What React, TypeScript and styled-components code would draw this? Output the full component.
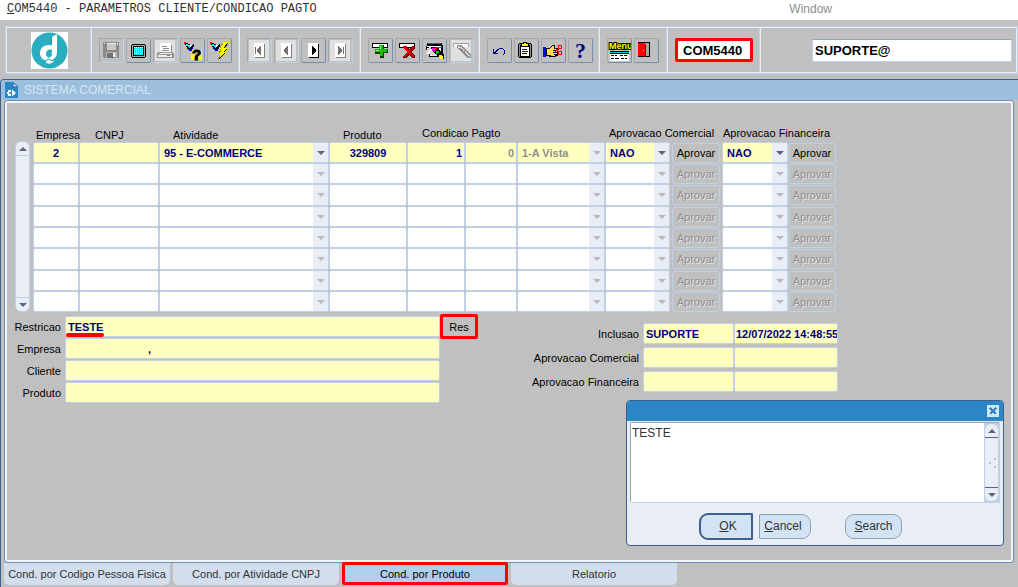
import React from "react";
import styled, { createGlobalStyle, css } from "styled-components";

const colors = {
  face: "#c0c0c0",
  line: "#c0d0e6",
  light: "#e9eef6",
  field: "#ffffc0",
  navy: "#000080",
  steel: "#6f8fb5",
  deep: "#3f5f8f",
  mark: "#ff0000",
};

const GlobalStyle = createGlobalStyle`
  * { box-sizing: border-box; }
  body {
    margin: 0;
    background: ${colors.face};
    font-family: "Liberation Sans", Arial, sans-serif;
    font-size: 11px;
    color: #000;
  }
  button, input, select, textarea {
    font: inherit;
    margin: 0;
    border-radius: 0;
  }
`;

const Page = styled.div`
  min-height: 100vh;
  display: flex;
  flex-direction: column;
`;

/* ---------- menu bar ---------- */

const MenuBar = styled.nav`
  display: flex;
  justify-content: space-between;
  height: 20px;
  padding: 0 186px 0 7px;
  background: #fff;
  flex: none;
`;

const MenuItem = styled.button<{ $mono?: boolean }>`
  padding: 0;
  height: 18px;
  border: 0;
  background: none;
  line-height: 18px;
  font-size: 12px;
  font-family: ${(p) => (p.$mono ? '"Liberation Mono", monospace' : "inherit")};
  color: ${(p) => (p.$mono ? "#303030" : "#8c8c8c")};
  white-space: nowrap;
`;

/* ---------- toolbar ---------- */

const Toolbar = styled.header`
  display: flex;
  height: 48px;
  margin: 6px 0 5px 5px;
  border: 2px solid ${colors.line};
  border-right-width: 1px;
  outline: 1px solid ${colors.light};
  outline-offset: -2px;
  flex: none;
`;

const Group = styled.div<{ $width?: number; $center?: boolean }>`
  display: flex;
  align-items: center;
  gap: 2px;
  flex: ${(p) => (p.$width ? "none" : "1")};
  width: ${(p) => (p.$width ? `${p.$width}px` : "auto")};
  padding-left: ${(p) => (p.$center ? 0 : 7)}px;
  justify-content: ${(p) => (p.$center ? "center" : "flex-start")};
  border-right: 1px solid ${colors.light};
  box-shadow: inset -1px 0 ${colors.line};
  &:last-child {
    border-right: 0;
    box-shadow: none;
    padding: 0 5px 0 51px;
  }
`;

const ToolButton = styled.button`
  width: 25px;
  height: 25px;
  padding: 0;
  background: none;
  border: 1px solid #a6a6a6;
  border-right-color: ${colors.steel};
  border-bottom-color: ${colors.steel};
  border-radius: 2px;
  svg { display: block; }
  &:disabled {
    border-right-color: ${colors.line};
    border-bottom-color: ${colors.line};
  }
`;

const CodeField = styled.input`
  width: 78px;
  height: 24px;
  padding: 0 5px;
  border: 3px solid ${colors.mark};
  border-radius: 2px;
  background: #fff;
  font-size: 13px;
  font-weight: bold;
`;

const UserField = styled.input`
  flex: 1;
  min-width: 0;
  height: 23px;
  padding: 0 2px;
  border: 1px solid ${colors.line};
  border-top-color: #94a3b8;
  border-radius: 2px;
  background: #fff;
  font-size: 13px;
  font-weight: bold;
`;

/* ---------- window ---------- */

const Window = styled.main`
  flex: 1;
  display: flex;
  flex-direction: column;
  border-top: 1px solid ${colors.deep};
  border-left: 1px solid ${colors.deep};
  border-top-left-radius: 4px;
`;

const TitleBar = styled.h1`
  display: flex;
  align-items: center;
  gap: 5px;
  height: 20px;
  margin: 0;
  padding-left: 4px;
  background: #9cbfde;
  color: #d9e6f4;
  font-size: 12px;
  font-weight: normal;
  border-top-left-radius: 3px;
`;

const Panel = styled.section`
  position: relative;
  flex: 1;
  margin: 0 4px 0 3px;
  padding: 22px 0 20px;
  border: 1px solid ${colors.steel};
  border-radius: 3px;
  box-shadow: inset 0 0 0 2px #f1f5fa;
`;

const Records = styled.div`
  display: flex;
  align-items: flex-end;
  gap: 3px;
  padding-left: 10px;
`;

const ScrollTrack = styled.div`
  display: flex;
  flex-direction: column;
  justify-content: space-between;
  align-items: center;
  width: 15px;
  height: 171px;
  background: ${colors.light};
  border: 1px solid ${colors.line};
  border-radius: 6px;
`;

const ScrollEnd = styled.button<{ $down?: boolean }>`
  display: flex;
  align-items: center;
  justify-content: center;
  width: 13px;
  height: 14px;
  padding: 0;
  border: 0 solid ${colors.line};
  border-bottom-width: ${(p) => (p.$down ? 0 : 1)}px;
  border-top-width: ${(p) => (p.$down ? 1 : 0)}px;
  background: none;
`;

const Triangle = styled.span<{ $up?: boolean; $dim?: boolean }>`
  width: 0;
  height: 0;
  border: 4px solid transparent;
  ${(p) =>
    p.$up
      ? css`border-top: 0; border-bottom-color: #62627e;`
      : css`border-bottom: 0; border-top-color: ${p.$dim ? "#b8b8b8" : "#62627e"};`}
`;

const Grid = styled.table`
  border-collapse: collapse;
  table-layout: fixed;
  width: 803px;
  td { padding: 0; height: 21px; }
  tr:nth-child(3n) td { height: 22px; }
`;

const Head = styled.th<{ $indent?: number; $raise?: boolean }>`
  height: 19px;
  padding: 0 0 ${(p) => (p.$raise ? 3 : 1)}px ${(p) => p.$indent ?? 0}px;
  font-weight: normal;
  text-align: left;
  vertical-align: bottom;
  white-space: nowrap;
`;

type FieldProps = { $filled?: boolean; $align?: string; $dim?: boolean };

const fieldStyle = css<FieldProps>`
  display: block;
  width: 100%;
  height: 100%;
  min-width: 0;
  border: 1px solid ${colors.line};
  border-radius: 2px;
  background: ${(p) => (p.$filled ? colors.field : "#fff")};
  color: ${(p) => (p.$dim ? "#909090" : colors.navy)};
  font-weight: bold;
  text-align: ${(p) => p.$align ?? "left"};
  opacity: 1;
`;

const Field = styled.input<FieldProps & { $flush?: boolean; $indent?: number }>`
  ${fieldStyle}
  padding: 0 ${(p) => (p.$flush ? 0 : 2)}px 0 ${(p) => (p.$flush ? 1 : p.$indent ?? 2)}px;
`;

const SelectBox = styled.div`
  display: grid;
  grid-template-columns: 1fr 16px;
  height: 100%;
`;

const SelectField = styled.select<FieldProps>`
  ${fieldStyle}
  appearance: none;
  grid-area: 1 / 1 / 2 / 3;
  padding: 0 16px 0 4px;
`;

const SelectArrow = styled.span`
  grid-area: 1 / 2;
  display: flex;
  align-items: center;
  justify-content: center;
  margin: 1px 1px 1px 0;
  background: ${colors.light};
  pointer-events: none;
`;

const ApproveButton = styled.button<{ $gap?: boolean }>`
  display: block;
  width: 48px;
  height: 20px;
  margin-left: ${(p) => (p.$gap ? 2 : 0)}px;
  padding: 0;
  border: 1px solid ${colors.line};
  border-radius: 2px;
  background: none;
  color: #000;
  &:disabled {
    color: #8f8f8f;
    text-shadow: 1px 1px #e4e4e4;
  }
`;

const Details = styled.div`
  display: flex;
  align-items: flex-start;
  margin-top: 4px;
`;

const LeftForm = styled.form`
  display: grid;
  grid-template-columns: 60px 375px 38px;
  grid-auto-rows: 21px;
  row-gap: 1px;
  align-items: center;
`;

const RightForm = styled.form`
  display: grid;
  grid-template-columns: 162px 91px 104px;
  grid-auto-rows: 21px;
  row-gap: 3px;
  align-items: center;
  margin: 7px 0 0 3px;
`;

const Label = styled.label`
  padding-right: 4px;
  text-align: right;
  white-space: nowrap;
`;

const MarkedField = styled.div`
  position: relative;
  height: 100%;
  &::after {
    content: "";
    position: absolute;
    left: 1px;
    bottom: 0;
    width: 38px;
    height: 4px;
    border-radius: 2px;
    background: ${colors.mark};
  }
`;

const ResButton = styled.button`
  width: 38px;
  height: 25px;
  padding: 0;
  border: 3px solid ${colors.mark};
  border-radius: 2px;
  background: ${colors.face};
`;

/* ---------- tabs ---------- */

const Tabs = styled.div`
  display: flex;
  gap: 3px;
  height: 24px;
  padding-left: 3px;
  flex: none;
`;

const Tab = styled.button<{ $active?: boolean }>`
  width: 166px;
  height: ${(p) => (p.$active ? 23 : 22)}px;
  margin-top: ${(p) => (p.$active ? -1 : 0)}px;
  padding: 0;
  position: relative;
  white-space: nowrap;
  border: ${(p) => (p.$active ? `3px solid ${colors.mark}` : "0")};
  border-radius: ${(p) => (p.$active ? "2px" : "0 0 5px 5px")};
  background: ${(p) => (p.$active ? "#b0cfea" : "#d0deee")};
  color: ${(p) => (p.$active ? "#000" : "#333")};
`;

/* ---------- editor dialog ---------- */

const Dialog = styled.div`
  position: absolute;
  right: 9px;
  top: 299px;
  width: 378px;
  height: 146px;
  border: 1px solid ${colors.deep};
  border-radius: 4px;
  background: ${colors.light};
  overflow: hidden;
  font-size: 12px;
  color: #333;
`;

const DialogTitle = styled.div`
  display: flex;
  align-items: center;
  justify-content: flex-end;
  height: 20px;
  padding-right: 4px;
  background: #2c85c5;
`;

const CloseButton = styled.button`
  width: 12px;
  height: 12px;
  padding: 0;
  border: 0;
  background: #cfe6f7;
  svg { display: block; }
`;

const EditorRow = styled.div`
  display: flex;
  height: 81px;
  margin: 1px 3px 0;
  border: 1px solid ${colors.line};
  border-top-color: #94a3b8;
  border-left-color: #94a3b8;
  border-radius: 2px;
`;

const Editor = styled.textarea`
  flex: 1;
  min-width: 0;
  padding: 3px 1px;
  border: 0;
  resize: none;
  background: #fff;
  color: #333;
  overflow: hidden;
`;

const EditorTrack = styled.div`
  display: flex;
  padding: 1px;
  background: ${colors.line};
`;

const EditorScroll = styled.div`
  display: flex;
  flex-direction: column;
  align-items: center;
  justify-content: space-between;
  width: 13px;
  background: ${colors.light};
  border-radius: 6px;
`;

const EditorEnd = styled(ScrollEnd)`
  border-color: #62627e;
`;

const DialogActions = styled.div`
  display: flex;
  align-items: center;
  height: 28px;
  margin: 9px 0 0 72px;
`;

const DialogButton = styled.button<{ $kind: "ok" | "cancel" | "search" }>`
  height: ${(p) => (p.$kind === "ok" ? 27 : 25)}px;
  width: ${(p) => ({ ok: 54, cancel: 52, search: 57 })[p.$kind]}px;
  margin-right: ${(p) => ({ ok: 6, cancel: 34, search: 0 })[p.$kind]}px;
  padding: 0 ${(p) => (p.$kind === "cancel" ? 4 : 0)}px 0 ${(p) => (p.$kind === "ok" ? 4 : 0)}px;
  border: ${(p) => (p.$kind === "ok" ? `2px solid ${colors.deep}` : "1px solid #8ba0ba")};
  border-radius: ${(p) => ({ ok: "9px 1px 1px 9px", cancel: "1px 9px 9px 1px", search: "9px" })[p.$kind]};
  background: #d2e4f4;
  color: #333;
`;

/* ---------- icons ---------- */

const Icon = ({ children }: { children: React.ReactNode }) => (
  <svg width="23" height="23" viewBox="1 1 23 23" shapeRendering="crispEdges" aria-hidden="true">
    {children}
  </svg>
);

const Disabled = () => <rect x="2" y="2" width="20" height="21" fill="#e0e0e0" />;

const Torch = ({ x = 0 }: { x?: number }) => (
  <g transform={`translate(${x} 0)`}>
    <path d="M4 4h2v1h2v1h2v1h3v-1h1v3h-1v2h-1v2h-2v-1h-2v-1h-1v-2h-1v-2h-1v-1h-1z" fill="#000" />
    <path d="M4 4h2v2h-2zM7 6h1v1h-1z" fill="#f00" />
    <path d="M6 6h2v1h2v3h-1v-1h-1v-1h-2z" fill="#0ff" />
    <path d="M8 10h1v1h3v-2h1v2h-1v2h-3v-1h-1z" fill="#00f" />
    <path d="M10 7h2v1h-1v1h-1z" fill="#fff" />
  </g>
);

const SaveIcon = () => (
  <Icon>
    <path d="M4 4h16v16h-15v-1h-1z" fill="#8a8a8a" />
    <path d="M8 5h9v7h-9z" fill="#c8c8c8" />
    <path d="M8 5h9v1h-9zM5 5h1v1h-1zM18 5h1v2h-1z" fill="#eee" />
    <path d="M7 14h11v6h-11z" fill="#b8b8b8" />
    <path d="M8 15h8v5h-8z" fill="#707070" />
    <path d="M14 15h2v4h-2z" fill="#eee" />
  </Icon>
);

const ScreenIcon = () => (
  <Icon>
    <path d="M6 6h13v1h1v12h-1v1h-13v-1h-1v-12h1z" fill="#000" />
    <path d="M6 7h13v12h-13z" fill="#a8a8a8" />
    <path d="M7 8h11v10h-11z" fill="#000" />
    <path d="M8 9h9v8h-9z" fill="#00e8e8" />
    <path d="M8.5 9v8M10.500 9v8M12.500 9v8M14.500 9v8M16.500 9v8" stroke="#fff" strokeDasharray="1 1" />
  </Icon>
);

const PrintIcon = () => (
  <Icon>
    <Disabled />
    <path d="M7 5h10l1 2v7h-11z" fill="#fff" />
    <path d="M9 8h5v1h-5zM10 10h6v1h-6zM9 12h7v1h-7zM18 7h1v7h-1z" fill="#8a8a8a" />
    <path d="M5 14h15v1h1v5h-17v-5h1z" fill="#909090" />
    <path d="M6 15h13v1h-14zM5 17h14v2h-14z" fill="#f0f0f0" />
    <path d="M14 17h3v1h-3z" fill="#808080" />
  </Icon>
);

const QueryHelpIcon = () => (
  <Icon>
    <path d="M14 12h8v10h-11v-8h3z" fill="#e0e0a0" />
    <path d="M11 14.500h11M11 16.500h11M11 18.500h11M11 20.500h11" stroke="#ff0" strokeDasharray="1 1" />
    <path d="M12 12h2v2h-2zM19 14h3v1h-3zM11 18h3v3h-3zM18 19h3v3h-3z" fill="#ff0" />
    <Torch />
    <text x="12" y="22" fontFamily="Liberation Sans" fontWeight="bold" fontSize="15" fill="#000" stroke="#000">?</text>
  </Icon>
);

const QueryRunIcon = () => (
  <Icon>
    <Torch x={-1} />
    <path d="M16 4h6l-5 6h4l-4 4h2l-8 8 3-7h-3l3-4h-2z" fill="#ff0" />
    <path d="M21 5l-4 5M20 11l-3 3M18 15l-6 6" fill="none" stroke="#000" />
    <path d="M16 5l-3 5M14 12l-2 3M13 17l-2 5" stroke="#a0a000" />
  </Icon>
);

const NavIcon = ({ dir, end, off }: { dir: "l" | "r"; end?: boolean; off?: boolean }) => (
  <Icon>
    {off && <Disabled />}
    <path d="M7 5h10v14h-10z" fill="#fff" />
    <path d="M17 6h1v14h-10v-1h9z" fill={off ? "#808080" : "#000"} />
    {dir === "l" ? (
      <path d="M14 8v9h-1v-1h-1v-1h-1v-1h-1v-3h1v-1h1v-1h1v-1z" fill="#707070" />
    ) : (
      <path
        d={end ? "M10 8v9h1v-1h1v-1h1v-1h1v-3h-1v-1h-1v-1h-1v-1z" : "M11 8v9h1v-1h1v-1h1v-1h1v-3h-1v-1h-1v-1h-1v-1z"}
        fill={off ? "#707070" : "#000"}
      />
    )}
    {end && <path d={dir === "l" ? "M8 9h1v7h-1z" : "M15 9h1v7h-1z"} fill="#707070" />}
  </Icon>
);

const Bar = () => (
  <>
    <path d="M4 5h16v5h-16z" fill="#000" />
    <path d="M5 6h14v3h-14z" fill="#fff" />
  </>
);

const InsertIcon = () => (
  <Icon>
    <Bar />
    <path d="M11 7h5v4h4v4h-4v5h-4v-4h-5v-4h4z" fill="#003c00" />
    <path d="M11 7h4v4h4v3h-4v4h-3v-4h-5v-3h4z" fill="#00c800" />
    <path d="M12 8h1v3h-1zM8 12h3v1h-3z" fill="#80ff80" />
  </Icon>
);

const DeleteIcon = () => (
  <Icon>
    <Bar />
    <path d="M8 8h3l3 3 3-3h3v2l-4 4 4 4v2h-3l-3-3-3 3h-3v-2l4-4-4-4z" fill="#600000" />
    <path d="M8 8h2l4 4 4-4h1v1l-4 5 4 4v1h-2l-3-4-4 4h-2v-1l4-4-4-5z" fill="#e00000" />
  </Icon>
);

const LookupIcon = () => (
  <Icon>
    <path d="M5 5h15v2h1v12h-14v-3h-3v-8h1z" fill="#000" />
    <path d="M6 5h13v1h-13z" fill="#008080" />
    <path d="M5 8h14v1h-14zM17 10h2v7h-2zM5 10h5v6h-5zM8 16h9v2h-9z" fill="#fff" />
    <path d="M13 9h7v1h-7z" fill="#008080" />
    <path d="M10 10l-6 6v-4l4-3zM9 12l5 5h-6z" fill="#d8d8d8" />
    <path d="M9 9h6l7 8v4h-4l-8-8z" fill="#000" />
    <path d="M10 10h3v3h-3z" fill="#f0f" />
    <path d="M13 9h2v3h-2zM12 13h1v1h-1z" fill="#f00" />
    <path d="M14 13h3v2h-2v2h-1z" fill="#00d000" />
    <path d="M17 17h3v1h1v3h-3v-1h-1z" fill="#ff0" />
  </Icon>
);

const CancelQueryIcon = () => (
  <Icon>
    <Disabled />
    <path d="M4 5h16v4h-16z" fill="#a0a0a0" />
    <path d="M5 6h14v3h-14z" fill="#fff" />
    <path d="M8 7h4l10 10v3h-3l-11-10z" fill="#909090" />
    <path d="M9 8l3 1 9 9-1 1-9-9-2 0z" fill="#d8d8d8" />
    <path d="M13 11h1v1h-1zM15 13h1v1h-1z" fill="#666" />
  </Icon>
);

const UndoIcon = () => (
  <Icon>
    <path
      d="M6 11h1v3h1v-1h1v-1h1v-1h2v-1h4v1h1v1h1v4h-1v1h-1v-1h1v-4h-1v-1h-4v1h-1v1h-1v1h-1v1h2v1h-5z"
      fill="#000080"
    />
  </Icon>
);

const ClipboardIcon = () => (
  <Icon>
    <path d="M5 5h12v1h1v13h-1v1h-12v-1h-1v-13h1z" fill="#000" />
    <path d="M5 6h12v13h-12z" fill="#909090" />
    <path d="M6 7h10v12h-10z" fill="#000" />
    <path d="M7 8h8v10h-8z" fill="#fff" />
    <path d="M9 4h4v1h2v4h-8v-4h2z" fill="#000" />
    <path d="M10 5h2v1h2v2h-6v-2h2z" fill="#ff0" />
    <path d="M8 11h5v1h-5zM8 13h6v1h-6zM8 15h5v1h-5z" fill="#0000b0" />
  </Icon>
);

const CutIcon = () => (
  <Icon>
    <path d="M2 9h3v10h-3z" fill="#00f" />
    <path d="M5 10h3l3-3h3v3h4v2h-1v6h-2v1h-7v-1h-3z" fill="#000" />
    <path d="M6 11h3l2-3h2v3h4v1h-5v1h4v1h-4v1h4v1h-3v1h1v1h-4v-1h-4z" fill="#ffe040" />
    <path d="M14 14l4-4M14 10l4 4" stroke="#f00" />
    <path d="M17.500 7.500h3v3h-3zM17.500 13.500h3v3h-3z" fill="none" stroke="#f00" />
  </Icon>
);

const HelpIcon = () => (
  <Icon>
    <text x="7" y="20" fontFamily="Liberation Serif" fontWeight="bold" fontSize="22" fill="#000080">?</text>
  </Icon>
);

const MenuIcon = () => (
  <Icon>
    <text
      x="2" y="11" fontFamily="Liberation Sans" fontWeight="bold" fontSize="9"
      fill="#ff0" stroke="#000" strokeWidth="2" paintOrder="stroke"
    >
      Menu
    </text>
    <path d="M3 13h19v1h-19zM3 15h19v1h-19z" fill="#000" />
    <path d="M3 14h19v1h-19z" fill="#0cc" />
    <path d="M3 16h19v7h-19z" fill="#fff" />
    <path d="M4 17h3v1h-3zM8 17h2v1h-2zM13 17h3v1h-3zM17 17h3v1h-3zM4 20h3v1h-3zM8 20h4v1h-4zM14 20h3v1h-3zM18 20h2v1h-2z" fill="#000" />
  </Icon>
);

const ExitIcon = () => (
  <Icon>
    <path d="M4 4h12v15h-12z" fill="#000" />
    <path d="M10 5h5v13h-5z" fill="#a8a8a8" />
    <path d="M5 5h6v1h1v13h-2v-1h-6v-13z" fill="#f00" />
    <path d="M11 7h1v12h-2v-1h1z" fill="#800000" />
    <path d="M9 12h1v1h-1z" fill="#ff0" />
  </Icon>
);

const Logo = () => (
  <svg width="37" height="37" viewBox="0 0 37 37" role="img" aria-label="Logo">
    <rect width="37" height="37" fill="#fff" />
    <circle cx="18.500" cy="18.500" r="18" fill="#2badc0" />
    <path
      d="M21 5.500C21 4 24 3 26 2.500V20c0 5.500-3.500 8.500-8.500 8.500-5 0-8.500-2.500-8.500-7.500 0-5 4-8 9-8 1.200 0 2.200.2 3 .5z"
      fill="#fff"
    />
    <path d="M21 17.500c-4-.5-6 1.500-6 4.500 0 2 1 3 2.500 3 2.500 0 3.500-3 3.500-7.500z" fill="#2badc0" />
    <path d="M15 29.500c0-2 3-2.500 5-1 1 .7 2 .5 3 0-1 2.500-3.500 3.500-6 3-1.200-.3-2-1-2-2z" fill="#fff" />
    <path d="M14 29c2-2 5-2 7-.5M21 22c-1 3-2.500 4-4.500 4" fill="none" stroke="#2badc0" />
  </svg>
);

const FormIcon = () => (
  <svg width="14" height="16" viewBox="0 0 14 16" aria-hidden="true">
    <path d="M0 0h8l5 5v11H0z" fill="#2d87c6" />
    <path d="M8 0v5h5z" fill="#b5d6ee" stroke="#2d6da0" />
    <path d="M2 10h1V8h3v6H3v-2H2zM7 7.500l4 3.500-4 3.500z" fill="#fff" />
    <circle cx="5" cy="11" r="1" fill="#2d87c6" />
  </svg>
);

/* ---------- data ---------- */

type Tool = { name: string; icon: React.ReactNode; off?: boolean };

const toolGroups: { width: number; tools: Tool[] }[] = [
  {
    width: 148,
    tools: [
      { name: "Salvar", icon: <SaveIcon />, off: true },
      { name: "Tela", icon: <ScreenIcon /> },
      { name: "Imprimir", icon: <PrintIcon />, off: true },
      { name: "Entrar consulta", icon: <QueryHelpIcon /> },
      { name: "Executar consulta", icon: <QueryRunIcon /> },
    ],
  },
  {
    width: 121,
    tools: [
      { name: "Primeiro", icon: <NavIcon dir="l" end off />, off: true },
      { name: "Anterior", icon: <NavIcon dir="l" off />, off: true },
      { name: "Proximo", icon: <NavIcon dir="r" /> },
      { name: "Ultimo", icon: <NavIcon dir="r" end off />, off: true },
    ],
  },
  {
    width: 119,
    tools: [
      { name: "Inserir", icon: <InsertIcon /> },
      { name: "Excluir", icon: <DeleteIcon /> },
      { name: "Lista de valores", icon: <LookupIcon /> },
      { name: "Cancelar consulta", icon: <CancelQueryIcon />, off: true },
    ],
  },
  {
    width: 120,
    tools: [
      { name: "Desfazer", icon: <UndoIcon /> },
      { name: "Colar", icon: <ClipboardIcon /> },
      { name: "Recortar", icon: <CutIcon /> },
      { name: "Ajuda", icon: <HelpIcon /> },
    ],
  },
  {
    width: 68,
    tools: [
      { name: "Menu", icon: <MenuIcon /> },
      { name: "Sair", icon: <ExitIcon /> },
    ],
  },
];

const columnWidths = [46, 80, 170, 78, 58, 52, 88, 65, 52, 66, 48];

type RecordRow = {
  empresa: string;
  atividade: string;
  produto: string;
  condicao: string;
  parcela: string;
  descricao: string;
  comercial: string;
  financeira: string;
};

const emptyRow: RecordRow = {
  empresa: "", atividade: "", produto: "", condicao: "",
  parcela: "", descricao: "", comercial: "", financeira: "",
};

const rows: RecordRow[] = [
  {
    empresa: "2", atividade: "95 - E-COMMERCE", produto: "329809", condicao: "1",
    parcela: "0", descricao: "1-A Vista", comercial: "NAO", financeira: "NAO",
  },
  ...Array.from({ length: 7 }, () => emptyRow),
];

const Choice = ({ label, value, filled, dim }: { label: string; value: string; filled: boolean; dim?: boolean }) => (
  <SelectBox>
    <SelectField aria-label={label} defaultValue={value} $filled={filled} $dim={dim}>
      <option>{value}</option>
    </SelectField>
    <SelectArrow>
      <Triangle $dim={dim || !filled} />
    </SelectArrow>
  </SelectBox>
);

const Row = ({ row, filled }: { row: RecordRow; filled: boolean }) => (
  <tr>
    <td><Field aria-label="Empresa" defaultValue={row.empresa} $filled={filled} $align="center" /></td>
    <td><Field aria-label="CNPJ" $filled={filled} /></td>
    <td><Choice label="Atividade" value={row.atividade} filled={filled} /></td>
    <td><Field aria-label="Produto" defaultValue={row.produto} $filled={filled} $align="center" /></td>
    <td><Field aria-label="Condicao" defaultValue={row.condicao} $filled={filled} $align="right" /></td>
    <td><Field aria-label="Parcela" defaultValue={row.parcela} $filled={filled} $align="right" $dim /></td>
    <td><Choice label="Descricao" value={row.descricao} filled={filled} dim /></td>
    <td><Choice label="Aprovacao Comercial" value={row.comercial} filled={filled} /></td>
    <td><ApproveButton $gap disabled={!filled}>Aprovar</ApproveButton></td>
    <td><Choice label="Aprovacao Financeira" value={row.financeira} filled={filled} /></td>
    <td><ApproveButton disabled={!filled}>Aprovar</ApproveButton></td>
  </tr>
);

export default function App() {
  return (
    <Page>
      <GlobalStyle />
      <MenuBar>
        <MenuItem $mono><u>C</u>OM5440 - PARAMETROS CLIENTE/CONDICAO PAGTO</MenuItem>
        <MenuItem>Window</MenuItem>
      </MenuBar>

      <Toolbar>
        <Group $width={85} $center><Logo /></Group>
        {toolGroups.map((group) => (
          <Group key={group.tools[0].name} $width={group.width}>
            {group.tools.map((tool) => (
              <ToolButton key={tool.name} aria-label={tool.name} disabled={tool.off}>
                {tool.icon}
              </ToolButton>
            ))}
          </Group>
        ))}
        <Group $width={93} $center><CodeField aria-label="Programa" defaultValue="COM5440" /></Group>
        <Group><UserField aria-label="Usuario" defaultValue="SUPORTE@" /></Group>
      </Toolbar>

      <Window>
        <TitleBar><FormIcon />SISTEMA COMERCIAL</TitleBar>
        <Panel>
          <Records>
            <ScrollTrack>
              <ScrollEnd aria-label="Subir"><Triangle $up /></ScrollEnd>
              <ScrollEnd aria-label="Descer" $down><Triangle /></ScrollEnd>
            </ScrollTrack>
            <Grid>
              <colgroup>
                {columnWidths.map((width, i) => <col key={i} width={width} />)}
              </colgroup>
              <thead>
                <tr>
                  <Head $indent={3}>Empresa</Head>
                  <Head $indent={16}>CNPJ</Head>
                  <Head $indent={14}>Atividade</Head>
                  <Head $indent={14}>Produto</Head>
                  <Head $indent={15} $raise colSpan={3}>Condicao Pagto</Head>
                  <Head $indent={4} $raise colSpan={2}>Aprovacao Comercial</Head>
                  <Head $indent={1} $raise colSpan={2}>Aprovacao Financeira</Head>
                </tr>
              </thead>
              <tbody>
                {rows.map((row, i) => <Row key={i} row={row} filled={i === 0} />)}
              </tbody>
            </Grid>
          </Records>

          <Details>
            <LeftForm>
              <Label htmlFor="restricao">Restricao</Label>
              <MarkedField><Field id="restricao" defaultValue="TESTE" $filled /></MarkedField>
              <ResButton type="button">Res</ResButton>
              <Label htmlFor="empresa">Empresa</Label>
              <Field id="empresa" defaultValue="," $filled $indent={82} />
              <span />
              <Label htmlFor="cliente">Cliente</Label>
              <Field id="cliente" $filled />
              <span />
              <Label htmlFor="produto">Produto</Label>
              <Field id="produto" $filled />
            </LeftForm>
            <RightForm>
              <Label htmlFor="inclusao">Inclusao</Label>
              <Field id="inclusao" defaultValue="SUPORTE" $filled />
              <Field aria-label="Data de inclusao" defaultValue="12/07/2022 14:48:55" $filled $flush />
              <Label htmlFor="comercial">Aprovacao Comercial</Label>
              <Field id="comercial" $filled />
              <Field aria-label="Data da aprovacao comercial" $filled />
              <Label htmlFor="financeira">Aprovacao Financeira</Label>
              <Field id="financeira" $filled />
              <Field aria-label="Data da aprovacao financeira" $filled />
            </RightForm>
          </Details>

          <Dialog role="dialog" aria-label="Editor">
            <DialogTitle>
              <CloseButton aria-label="Fechar">
                <svg width="12" height="12" viewBox="0 0 12 12" shapeRendering="crispEdges">
                  <path d="M3 3l6 6M9 3l-6 6" stroke="#2c85c5" strokeWidth="2" />
                </svg>
              </CloseButton>
            </DialogTitle>
            <EditorRow>
              <Editor aria-label="Texto" defaultValue="TESTE" />
              <EditorTrack>
                <EditorScroll>
                  <EditorEnd aria-label="Subir texto"><Triangle $up /></EditorEnd>
                  <svg width="10" height="12" viewBox="0 0 10 12" shapeRendering="crispEdges" aria-hidden="true">
                    <path d="M2 7l2-2M7 3l2-2M7 11l2-2" stroke="#8ba0ba" />
                  </svg>
                  <EditorEnd aria-label="Descer texto" $down><Triangle /></EditorEnd>
                </EditorScroll>
              </EditorTrack>
            </EditorRow>
            <DialogActions>
              <DialogButton $kind="ok"><u>O</u>K</DialogButton>
              <DialogButton $kind="cancel"><u>C</u>ancel</DialogButton>
              <DialogButton $kind="search"><u>S</u>earch</DialogButton>
            </DialogActions>
          </Dialog>
        </Panel>
        <Tabs role="tablist">
          <Tab role="tab">Cond. por Codigo Pessoa Fisica</Tab>
          <Tab role="tab">Cond. por Atividade CNPJ</Tab>
          <Tab role="tab" aria-selected $active>Cond. por Produto</Tab>
          <Tab role="tab">Relatorio</Tab>
        </Tabs>
      </Window>
    </Page>
  );
}
